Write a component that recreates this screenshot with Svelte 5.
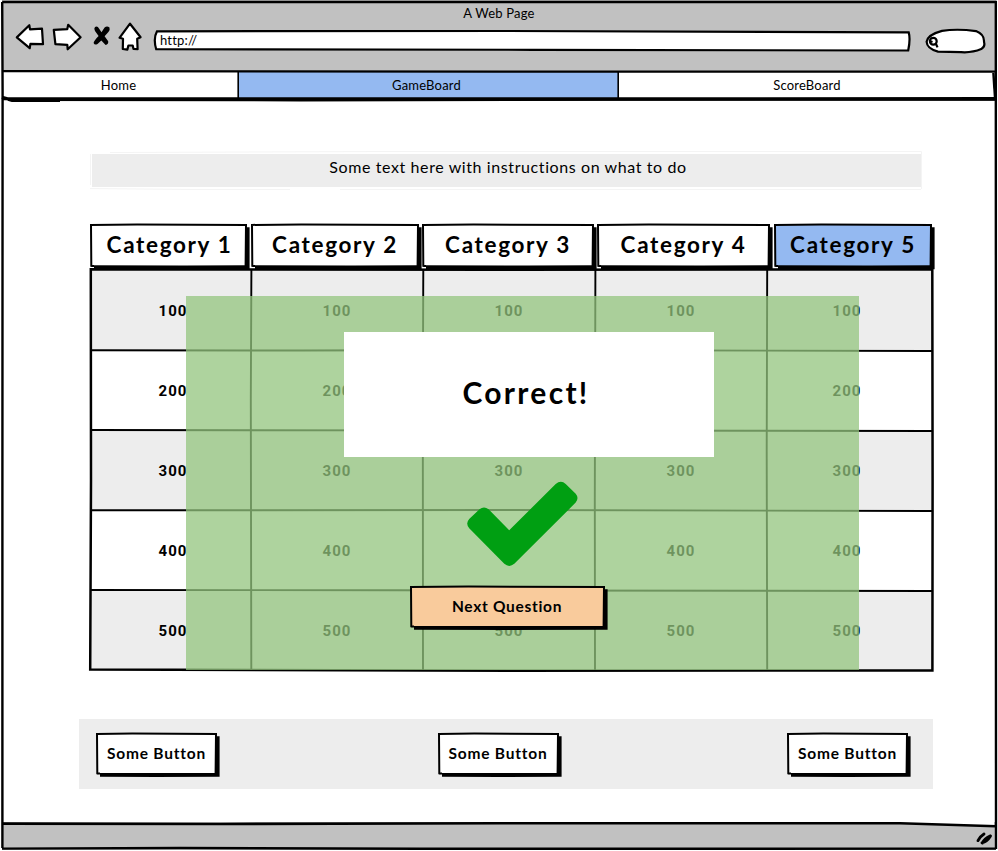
<script>
  const categories = [
    { n: 1, w: 157, gap: 0, pad: 2 },
    { n: 2, w: 168, gap: 4, pad: 0 },
    { n: 3, w: 172, gap: 3, pad: 0 },
    { n: 4, w: 173, gap: 3, pad: 0 },
    { n: 5, w: 158, gap: 4, pad: 0 }
  ];
  const rows = [100, 200, 300, 400, 500];
  const cols = [161, 172, 172, 172, 165];
</script>

{#snippet sketchBox(w, h, fill)}
  <svg class="sketch" width={w + 4} height={h + 4} aria-hidden="true">
    <path d="M4 3.2H{w + 2.6}V{h + 2.2}L{w / 2} {h + 2.6}L4 {h + 2.2}Z" fill="#000" />
    <path d="M1 .9L{w * 0.3} .5L{w - 1} 1L{w - 1.6} {h - 1.5}L{w * 0.6} {h - 1}L1.4 {h - 1.5}Z" {fill} />
    <path d="M1 .9L{w * 0.3} .5L{w - 1} 1L{w - 1.4} {h - 1.3}M1.3 {h - 1.2}L1 .9" fill="none" stroke="#000" stroke-width="2" stroke-linecap="square" />
    <path d="M1.3 {h - 1}H4M4 {h - 0.5}H{w}" fill="none" stroke="#000" stroke-width="1.8" />
  </svg>
{/snippet}

<div class="page">
  <header>
    <div class="title">A Web Page</div>
    <div class="tools">
      <svg class="icons" width="130" height="32" viewBox="14 22 130 32" aria-hidden="true">
        <g fill="#fff" stroke="#000" stroke-width="2.2" stroke-linejoin="round">
          <path d="M16.8 37.4L29.3 25.2L30 29.4L42 28.7L43 44.2L30.4 43.9L29.7 48.2Z" />
          <path d="M53.8 29.8L67.3 29.1L68.2 24.8L80.6 37.2L67.7 49.3L67.3 44.8L55.4 44.2Z" />
          <path d="M130 23.7L140.6 37.2L137.2 38.8L137.6 49.2L133.5 49L132.7 45.5H128.4L127.4 49.6L122.8 49L123 38.8L119.5 37.8Z" />
        </g>
        <path d="M95 27Q97.5 25.6 99 28.4L101.5 32.2L104.6 27.6Q107 25.4 109.5 27.6Q110.3 30 108.4 32L104.6 36.3L108.2 41.2Q108.6 44.4 105.6 44.9L101.3 40.4L97.5 44Q94.6 45.6 93.6 43Q93.8 40.6 98.6 35.9L95 31Q93.6 28.4 95 27Z" />
      </svg>
      <div class="address">
        <svg class="sketch" width="758" height="23" aria-hidden="true">
          <path d="M4 2.3L350 2L755.7 3.4Q757.6 10 755.2 21.5L380 20.8L3.2 20.2Q0 9.5 4 2.3Z" fill="#fff" stroke="#000" stroke-width="2.2" />
        </svg>
        <span>http://</span>
      </div>
      <svg class="search" width="62" height="27" viewBox="924 27 62 27" aria-hidden="true">
        <g fill="#fff" stroke="#000" stroke-width="2.2">
          <path d="M942 30.9Q957 28.5 976 31.1Q984.6 34.5 984 42Q985.5 46.5 981.2 49.1Q972 53 961 52.2L938 51.6Q927 48.8 926.6 41.8Q928 34.5 942 30.9Z" />
          <circle cx="933.3" cy="41.2" r="3.4" />
          <path d="M936 44L937.5 47.4M929.5 41L932.5 42" />
        </g>
      </svg>
    </div>
  </header>

  <nav>
    <div class="tab home"><span>Home</span></div>
    <div class="tab game"><span>GameBoard</span></div>
    <div class="tab score"><span>ScoreBoard</span></div>
  </nav>

  <main>
    <div class="hint">
      <svg class="hint-edge" width="833" height="40" aria-hidden="true">
        <path d="M.5 3V34M0 37.5L100 38.5L200 38.5M250 38.5H831M20 1.5L300 .5H831.5V38" fill="none" stroke="#f4f4f4" />
      </svg>
      <span>Some text here with instructions on what to do</span>
    </div>

    <div class="cats">
      {#each categories as c}
        <div class="cat" style="width:{c.w}px;margin-left:{c.gap}px;padding-left:{c.pad}px">
          {@render sketchBox(c.w, 43, c.n === 5 ? '#94b9f1' : '#fff')}
          <span>Category {c.n}</span>
        </div>
      {/each}
    </div>

    <div class="board">
      {#each rows as r}
        <div class="row">
          {#each cols as w, i}
            <div class="cell" class:first={i === 0} class:last={i === 4} style="width:{w}px"><span>{r}</span></div>
          {/each}
        </div>
      {/each}
      <svg class="grid" width="848" height="406" viewBox="88 267 848 406" aria-hidden="true">
        <g fill="none" stroke="#000" stroke-width="1.9">
          <path d="M91 350.2L300 350.5L500 350L932 351M91 430L420 430.4L932 431M91 510.3L500 510L932 511M91 590L400 590.3L932 591" />
          <path d="M251.4 269L250.8 400L251.3 670M423.3 269L422.8 400L423 670M595.4 269L594.8 500L595 670M767.2 269L766.7 450L767.2 670" />
        </g>
        <path d="M90.8 269.3L500 269.8L932.3 269.3L932.6 480L932.4 670.4L510 670.8L90.2 669.6L91 480Z" fill="none" stroke="#000" stroke-width="2.5" />
      </svg>

      <div class="overlay">
        <div class="dialog"><span>Correct!</span></div>
        <svg class="check" width="112" height="86" viewBox="466 481 112 86" aria-hidden="true">
          <path d="M469.2 519L479.5 509.3Q484 505.8 488.6 509.3L509.2 530.3L555.7 484Q561 479.7 565.7 484L575.7 493.7Q579.3 498 575.7 502.6L514.3 563.8Q509.2 568 504.3 563.8L469.2 528.3Q465.2 523.5 469.2 519Z" fill="#009f12" />
        </svg>
        <div class="next">
          {@render sketchBox(195, 41.5, '#f9cb9c')}
          <span>Next Question</span>
        </div>
      </div>
    </div>

    <div class="bar">
      {#each [0, 1, 2] as _}
        <div class="btn">
          {@render sketchBox(121, 41.5, '#fff')}
          <span>Some Button</span>
        </div>
      {/each}
    </div>
  </main>

  <footer></footer>

  <svg class="frame" width="998" height="851" aria-hidden="true">
    <path d="M900 820H994V825.5L900 823Z" fill="#fff" />
    <g fill="none" stroke="#000">
      <path d="M2.2 2L995.8 2L996 849M2.2 2L2.6 90L2.4 500L2.4 848" stroke-width="2.4" />
      <path d="M2 71.2L500 71.6L996 71.6" stroke-width="2.2" />
      <path d="M238.2 72V98M618.2 72V100" stroke-width="1.6" />
      <path d="M993.4 73L995 98" stroke-width="2.4" />
      <path d="M2 97.4L12 100.2L60 100.2M3 98.6L200 99L560 99L995 98.8" stroke-width="3.4" />
      <path d="M8 100L300 100.4L600 99.8L995 99.8" stroke-width="2" />
      <path d="M2 823.6L220 824L500 823.2L900 823.2L996 826.2" stroke-width="2.6" />
      <path d="M2 848.6L180 848L420 848.8L996 848.6" stroke-width="2.4" />
    </g>
    <path d="M978 840.6Q980 836.5 984 834M982.3 843Q984.5 838.5 990 836M982 842.8Q987 841.8 990.5 836" fill="none" stroke="#000" stroke-width="2.9" stroke-linecap="round" />
  </svg>
</div>

<style>
  :global(body) { background: #fff; overflow: hidden; }
  .page { position: relative; width: 998px; height: 851px; display: flex; flex-direction: column; font-family: Lato, "Open Sans", sans-serif; color: #000; overflow: hidden; }
  .page span { white-space: nowrap; position: relative; }
  .frame { position: absolute; left: 0; top: 0; pointer-events: none; }
  .sketch { position: absolute; left: 0; top: 0; overflow: visible; }

  header { height: 72px; margin: 0 2px; background: #c1c1c1; flex: none; }
  .title { font-size: 13px; line-height: 16px; padding-top: 5px; text-align: center; letter-spacing: .2px; }
  .tools { display: flex; align-items: flex-start; }
  .icons { margin: 1px 0 0 12px; }
  .address { position: relative; width: 758px; height: 23px; margin: 8px 0 0 9px; font-size: 13px; line-height: 23px; letter-spacing: .2px; }
  .address span { padding-left: 7px; }
  .search { margin: 6px 0 0 13px; }

  nav { height: 28px; margin: 0 2px; display: flex; flex: none; font-size: 13px; line-height: 27px; }
  .tab { box-sizing: border-box; text-align: center; letter-spacing: .2px; }
  .home { width: 236px; padding-right: 3px; }
  .game { width: 380px; background: #94b9f1; padding-right: 3px; }
  .score { flex: 1; padding-right: 0; }

  main { flex: 1; display: flex; flex-direction: column; }
  .hint { position: relative; width: 829px; height: 33px; margin: 54px 0 0 92px; background: #ededed; box-sizing: border-box; padding-left: 3px; text-align: center; font-size: 16px; line-height: 26px; letter-spacing: .6px; }
  .hint-edge { position: absolute; left: -2px; top: -3px; }
  .cats { display: flex; margin: 36.5px 0 0 90px; height: 45.5px; }
  .cat { position: relative; box-sizing: border-box; text-align: center; font-size: 22.5px; font-weight: 700; line-height: 41px; letter-spacing: 1.65px; height: 43px; }

  .board { position: relative; width: 842px; height: 400px; margin: 1px 0 0 90px; }
  .row { display: flex; height: 80px; background: #ededed; }
  .row:nth-child(even) { background: #fff; }
  .cell { box-sizing: border-box; text-align: center; font-family: Roboto, sans-serif; font-size: 15px; font-weight: 700; line-height: 82px; letter-spacing: 1.1px; }
  .first { padding-left: 5px; }
  .last { padding-right: 5px; }
  .grid { position: absolute; left: -2px; top: -3px; }
  .overlay { position: absolute; left: 96px; top: 26px; width: 673px; height: 374px; background: rgba(147, 196, 125, .75); display: flex; flex-direction: column; align-items: flex-start; }
  .dialog { width: 370px; height: 125px; margin: 36px 0 0 158px; padding-right: 6px; box-sizing: border-box; background: #fff; text-align: center; font-size: 30px; font-weight: 700; line-height: 121px; letter-spacing: 2.3px; }
  .check { margin: 24px 0 0 280px; }
  .next { position: relative; width: 194px; height: 42px; margin: 19px 0 0 224px; text-align: center; font-size: 15.5px; font-weight: 700; line-height: 41px; letter-spacing: .7px; }

  .bar { width: 854px; height: 70px; margin: 49px 0 0 79px; box-sizing: border-box; padding: 13.5px 25px 0 17px; background: #ededed; display: flex; justify-content: space-between; }
  .btn { position: relative; width: 121px; height: 42px; text-align: center; font-size: 15.5px; font-weight: 700; line-height: 40px; letter-spacing: .8px; }
  .btn:nth-child(2) { left: -4px; }

  footer { height: 28px; margin: 0 2px 1px; background: #c1c1c1; flex: none; }
</style>
